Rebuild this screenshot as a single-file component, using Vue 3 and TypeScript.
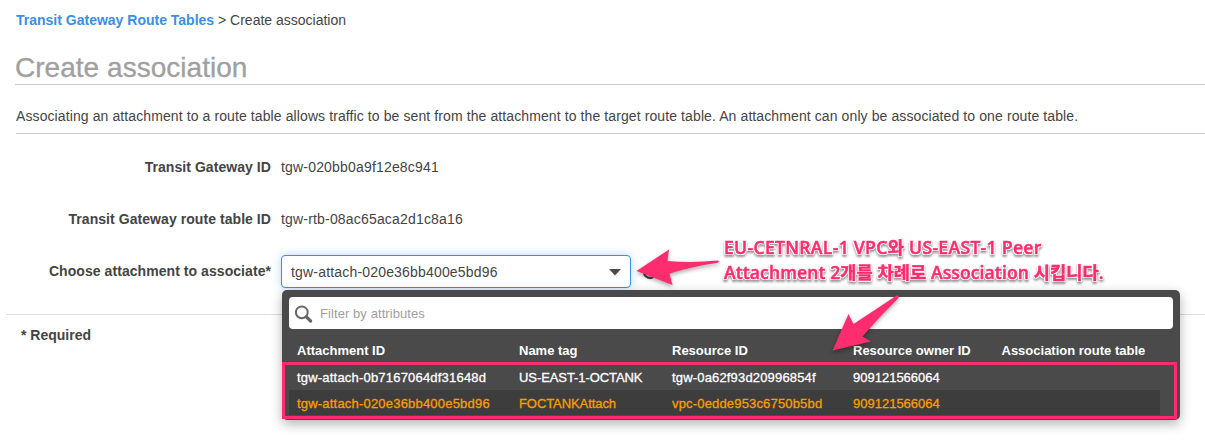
<script setup lang="ts">
interface Attachment {
  id: string
  name: string
  resource: string
  owner: string
  table: string
  selected: boolean
}

const columns: string[] = ['Attachment ID', 'Name tag', 'Resource ID', 'Resource owner ID', 'Association route table']

const attachments: Attachment[] = [
  { id: 'tgw-attach-0b7167064df31648d', name: 'US-EAST-1-OCTANK', resource: 'tgw-0a62f93d20996854f', owner: '909121566064', table: '', selected: false },
  { id: 'tgw-attach-020e36bb400e5bd96', name: 'FOCTANKAttach', resource: 'vpc-0edde953c6750b5bd', owner: '909121566064', table: '', selected: true },
]
</script>

<template>
  <main class="page">
    <nav class="crumbs"><a class="crumb-link">Transit Gateway Route Tables</a> &gt; Create association</nav>
    <h1 class="title">Create association</h1>
    <p class="intro">Associating an attachment to a route table allows traffic to be sent from the attachment to the target route table. An attachment can only be associated to one route table.</p>

    <section class="form">
      <div class="row">
        <span class="label">Transit Gateway ID</span>
        <span class="value">tgw-020bb0a9f12e8c941</span>
      </div>
      <div class="row">
        <span class="label">Transit Gateway route table ID</span>
        <span class="value">tgw-rtb-08ac65aca2d1c8a16</span>
      </div>
      <div class="row row-select">
        <span class="label">Choose attachment to associate*</span>
        <div class="picker">
          <div class="select">
            <span class="value">tgw-attach-020e36bb400e5bd96</span>
            <svg class="caret" width="12" height="7" viewBox="0 0 12 7"><path d="M0 0H12L6 6.6Z" fill="#4a4a4a" /></svg>
          </div>
          <svg class="refresh" width="16" height="16" viewBox="0 0 16 16"><circle cx="8" cy="8" r="6" fill="none" stroke="#444" stroke-width="2.4" /></svg>

          <div class="dropdown">
            <div class="filter">
              <svg width="19" height="19" viewBox="0 0 19 19" fill="none" stroke="#666">
                <circle cx="6.8" cy="7.3" r="5.9" stroke-width="2" />
                <path d="M11.4 11.8L15.6 16" stroke-width="3.2" stroke-linecap="round" />
              </svg>
              <span>Filter by attributes</span>
            </div>
            <div class="grid head">
              <span v-for="c in columns" :key="c">{{ c }}</span>
            </div>
            <div v-for="a in attachments" :key="a.id" class="grid item" :class="{ selected: a.selected }">
              <span class="cell-id">{{ a.id }}</span>
              <span class="cell-name">{{ a.name }}</span>
              <span class="cell-resource">{{ a.resource }}</span>
              <span>{{ a.owner }}</span>
              <span>{{ a.table }}</span>
            </div>
            <div class="highlight"></div>
          </div>
        </div>
      </div>
    </section>

    <footer class="required">* Required</footer>

    <svg class="arrows" width="1205" height="443" viewBox="0 0 1205 443" fill="#ff2d6f">
      <path d="M636.500 271L669 249.500L667.500 261Q692 263 718 260.500Q719.500 261.500 718 262.800Q692 266.500 669.500 273.500L672.500 285Z" />
      <path d="M832.500 350.500L848.500 314L853.500 324Q875 310 896.500 295.500Q899.500 295 898.500 298Q880 316 862.500 336.500L871 341.500Z" />
    </svg>
    <div class="note">
      <div class="note-a">EU-CETNRAL-1 VPC<b>와</b> US-EAST-1 Peer</div>
      <div class="note-b">Attachment 2<b>개를 차례로</b> Association <b>시킵니다</b>.</div>
    </div>
  </main>
</template>

<style>
body {
  margin: 0;
  background: #fff;
}
</style>

<style scoped>
.page {
  position: relative;
  width: 1205px;
  height: 443px;
  overflow: hidden;
  box-sizing: border-box;
  padding-top: 10px;
  background: #fff;
  color: #444;
  font: 14px/20px "Liberation Sans", Arial, sans-serif;
  white-space: nowrap;
}
.crumbs {
  margin-left: 16px;
}
.crumb-link {
  color: #3a8fe5;
  font-weight: bold;
}
.title {
  margin: 20px 0 0 15px;
  height: 34px;
  border-bottom: 1px solid #ccc;
  color: #a0a0a0;
  font-size: 28px;
  line-height: 35px;
  letter-spacing: 0.03px;
  font-weight: normal;
  -webkit-text-stroke: 0.3px currentColor;
}
.intro {
  margin: 0 0 0 16px;
  padding-top: 21px;
  height: 27px;
  border-bottom: 1px solid #ccc;
  letter-spacing: 0.1px;
}
.form {
  margin-left: 6px;
  height: 181px;
  box-sizing: border-box;
  padding-top: 23px;
  border-bottom: 1px solid #ddd;
}
.row {
  display: flex;
  gap: 10px;
  height: 52px;
}
.row-select {
  height: auto;
}
.label {
  width: 265px;
  text-align: right;
  font-weight: bold;
  letter-spacing: 0.06px;
}
.value {
  letter-spacing: 0.18px;
}
.picker {
  position: relative;
  display: flex;
  align-items: center;
  gap: 11px;
  height: 33px;
  margin-top: -6px;
}
.select {
  display: flex;
  align-items: center;
  justify-content: space-between;
  box-sizing: border-box;
  width: 350px;
  height: 33px;
  padding: 1px 9px 0 9px;
  border: 1px solid #3a8fe5;
  border-radius: 4px;
  background: #fff;
  box-shadow: 0 0 10px rgba(58, 143, 229, 0.35);
}
.dropdown {
  position: absolute;
  top: 35px;
  left: 1px;
  z-index: 1;
  box-sizing: border-box;
  width: 898px;
  height: 130px;
  padding: 7px 7px 0;
  border-radius: 5px;
  background: #4a4a4a;
  box-shadow: 0 4px 12px rgba(0, 0, 0, 0.3);
  font-size: 13px;
}
.filter {
  display: flex;
  align-items: center;
  gap: 6px;
  box-sizing: border-box;
  height: 32px;
  padding: 2px 0 0 6px;
  border-radius: 4px;
  background: #fff;
  color: #a0a0a0;
  letter-spacing: 0.08px;
}
.grid {
  display: grid;
  grid-template-columns: 222px 153px 181px 148.500px auto;
  width: 871px;
  box-sizing: border-box;
  padding-left: 8px;
  color: #fff;
}
.head {
  height: 36px;
  line-height: 43px;
  font-weight: bold;
}
.item {
  height: 25px;
  line-height: 25px;
  -webkit-text-stroke: 0.3px currentColor;
}
.selected {
  background: #3d3d3d;
  color: #fa9d00;
  line-height: 27px;
}
.cell-id {
  letter-spacing: 0.2px;
}
.cell-name {
  letter-spacing: -0.08px;
}
.cell-resource {
  letter-spacing: 0.17px;
}
.highlight {
  position: absolute;
  left: 0;
  top: 72px;
  box-sizing: border-box;
  width: 895px;
  height: 57px;
  border: 3px solid #ff2d6f;
}
.required {
  margin: 10px 0 0 21px;
  font-weight: bold;
}
.arrows {
  position: absolute;
  left: 0;
  top: 0;
  z-index: 2;
  filter: drop-shadow(0 2px 2px rgba(0, 0, 0, 0.35));
}
.note {
  position: absolute;
  left: 724px;
  top: 235px;
  z-index: 3;
  color: #ff2d6f;
  font: 600 17.6px/25px "Open Sans", "Noto Sans CJK KR", sans-serif;
  -webkit-text-stroke: 0.5px #ff2d6f;
  text-shadow: 1px 0 #fff, -1px 0 #fff, 0 1px #fff, 0 -1px #fff, 1px 1px #fff, -1px 1px #fff, 1px -1px #fff, -1px -1px #fff;
  filter: drop-shadow(0 2px 1px rgba(0, 0, 0, 0.4));
}
.note b {
  font-weight: 700;
}
.note-a {
  letter-spacing: 0.3px;
}
.note-b {
  letter-spacing: 0.08px;
}
</style>
